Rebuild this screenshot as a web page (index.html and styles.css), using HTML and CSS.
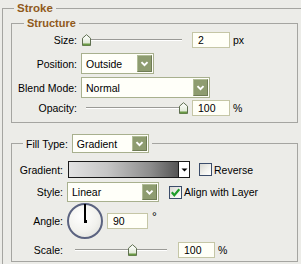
FILE: index.html
```html
<!DOCTYPE html>
<html>
<head>
<meta charset="utf-8">
<link rel="stylesheet" href="styles.css">
</head>
<body>
<fieldset class="outer">
  <legend class="ttl ttl-outer">Stroke</legend>
  <fieldset class="grp structure">
    <legend class="ttl ttl-inner">Structure</legend>
    <div class="row row-size">
      <span class="lbl lbl-s">Size:</span>
      <div class="slider slider-s">
        <svg class="thumb" style="left:0px" width="9" height="12" viewBox="0 0 9 12"><defs><linearGradient id="tg1" x1="0" y1="0" x2="0" y2="1"><stop offset="0" stop-color="#ffffff"/><stop offset="1" stop-color="#d9e4cd"/></linearGradient></defs><path d="M0.5 11.5V4.2L4.5 0.7L8.5 4.2V11.5Z" fill="url(#tg1)" stroke="#5f6f50"/><rect x="1" y="9.5" width="7" height="2" fill="#6a9a45"/></svg>
      </div>
      <div class="num num-s">2</div>
      <span class="unit">px</span>
    </div>
    <div class="row row-pos">
      <span class="lbl lbl-s">Position:</span>
      <div class="select sel-pos"><span class="sel-text">Outside</span><span class="arrow"><svg width="15" height="17" viewBox="0 0 15 17"><path d="M4 7L7.5 10.5L11 7" fill="none" stroke="#fff" stroke-width="2.2"/></svg></span></div>
    </div>
    <div class="row row-blend">
      <span class="lbl lbl-s">Blend Mode:</span>
      <div class="select sel-blend"><span class="sel-text">Normal</span><span class="arrow"><svg width="15" height="17" viewBox="0 0 15 17"><path d="M4 7L7.5 10.5L11 7" fill="none" stroke="#fff" stroke-width="2.2"/></svg></span></div>
    </div>
    <div class="row row-op">
      <span class="lbl lbl-s">Opacity:</span>
      <div class="slider slider-s">
        <svg class="thumb" style="left:97px" width="9" height="12" viewBox="0 0 9 12"><defs><linearGradient id="tg2" x1="0" y1="0" x2="0" y2="1"><stop offset="0" stop-color="#ffffff"/><stop offset="1" stop-color="#d9e4cd"/></linearGradient></defs><path d="M0.5 11.5V4.2L4.5 0.7L8.5 4.2V11.5Z" fill="url(#tg2)" stroke="#5f6f50"/><rect x="1" y="9.5" width="7" height="2" fill="#6a9a45"/></svg>
      </div>
      <div class="num num-s">100</div>
      <span class="unit">%</span>
    </div>
  </fieldset>
  <fieldset class="grp fill">
    <legend class="ttl-ctl">
      <span class="lbl">Fill Type:</span>
      <div class="select sel-fill"><span class="sel-text">Gradient</span><span class="arrow"><svg width="15" height="15" viewBox="0 0 15 15"><path d="M4 6L7.5 9.5L11 6" fill="none" stroke="#fff" stroke-width="2.2"/></svg></span></div>
    </legend>
    <div class="row row-grad">
      <span class="lbl lbl-f">Gradient:</span>
      <div class="gradbar"><span class="gradfill"></span><span class="graddrop"><svg width="9" height="15" viewBox="0 0 9 15"><path d="M1.5 6.5H7.5L4.5 9.5Z" fill="#000"/></svg></span></div>
      <span class="check check-rev"></span>
      <span class="cklbl cklbl-rev">Reverse</span>
    </div>
    <div class="row row-style">
      <span class="lbl lbl-f">Style:</span>
      <div class="select sel-style"><span class="sel-text">Linear</span><span class="arrow"><svg width="15" height="16" viewBox="0 0 15 16"><path d="M4 6.5L7.5 10L11 6.5" fill="none" stroke="#fff" stroke-width="2.2"/></svg></span></div>
      <span class="check check-align"><svg width="11" height="11" viewBox="0 0 11 11"><path d="M1.8 5.2L4.3 8.2L9.3 2.2" fill="none" stroke="#1f9d2a" stroke-width="2.2"/></svg></span>
      <span class="cklbl cklbl-align">Align with Layer</span>
    </div>
    <div class="row row-angle">
      <span class="lbl lbl-f">Angle:</span>
      <div class="dial"><span class="dial-line"></span><span class="dial-dot"></span></div>
      <div class="num num-a">90</div>
      <span class="deg">°</span>
    </div>
    <div class="row row-scale">
      <span class="lbl lbl-f">Scale:</span>
      <div class="slider slider-f">
        <svg class="thumb" style="left:57px" width="9" height="12" viewBox="0 0 9 12"><defs><linearGradient id="tg3" x1="0" y1="0" x2="0" y2="1"><stop offset="0" stop-color="#ffffff"/><stop offset="1" stop-color="#d9e4cd"/></linearGradient></defs><path d="M0.5 11.5V4.2L4.5 0.7L8.5 4.2V11.5Z" fill="url(#tg3)" stroke="#5f6f50"/><rect x="1" y="9.5" width="7" height="2" fill="#6a9a45"/></svg>
      </div>
      <div class="num num-sc">100</div>
      <span class="unit unit-sc">%</span>
    </div>
  </fieldset>
</fieldset>
</body>
</html>
```
FILE: styles.css
```css
* { box-sizing: border-box; }
html, body { margin: 0; padding: 0; }
body {
  width: 301px;
  height: 264px;
  overflow: hidden;
  background: #ecece8;
  font-family: "Liberation Sans", Arial, sans-serif;
  font-size: 10.5px;
  color: #000;
}
fieldset {
  margin: 0;
  padding: 0;
  border: 1px solid #a5a5a1;
  min-width: 0;
}
.outer {
  margin: 2px 0 0 2px;
  width: 299px;
  height: 262px;
  padding: 0 0 0 8px;
  border-right: none;
  border-bottom: none;
}
.ttl {
  font-weight: bold;
  font-size: 11.5px;
  color: #905a1c;
  line-height: 12px;
  padding: 0 3px;
}
.ttl-outer { margin-left: 3px; }
.ttl-inner { margin-left: 12px; font-size: 11px; }
.grp { width: 287px; }
.structure {
  margin-top: 3px;
  padding: 3px 0 6px 0;
}
.fill {
  margin-top: 11px;
  padding: 8px 0 3px 0;
}
.ttl-ctl {
  margin-left: 11px;
  padding: 0 3px;
  display: flex;
  align-items: center;
  height: 19px;
}
.row {
  display: flex;
  align-items: center;
}
.lbl { white-space: nowrap; }
.lbl-s { width: 65px; text-align: right; }
.lbl-f { width: 51px; text-align: right; }

.row-size { height: 16px; }
.row-pos { height: 21px; margin-top: 5px; }
.row-blend { height: 21px; margin-top: 3px; }
.row-op { height: 16px; margin-top: 2px; }

.row-grad { height: 17px; }
.row-style { height: 20px; margin-top: 4px; }
.row-angle { height: 36px; margin-top: 1px; }
.row-scale { height: 16px; margin-top: 3px; }

/* slider */
.slider {
  position: relative;
  height: 16px;
  background:
    linear-gradient(#9a9a96, #9a9a96) no-repeat 4px 7px / calc(100% - 12px) 1px,
    linear-gradient(#ffffff, #ffffff) no-repeat 4px 8px / calc(100% - 12px) 1px;
}
.slider-s { width: 108px; margin-left: 5px; }
.slider-f { width: 104px; margin-left: 8px; }
.thumb { position: absolute; top: 2px; }

/* numeric input */
.num {
  height: 16px;
  border: 1px solid #c5c6a6;
  background: #fffff7;
  padding-left: 5px;
  line-height: 14px;
}
.num-s { width: 38px; margin-left: 2px; }
.num-a { width: 41px; margin-left: 4px; }
.num-sc { width: 37px; margin-left: 3px; }
.unit { margin-left: 3px; }
.unit-sc { margin-left: 3px; }
.deg { margin-left: 4px; align-self: flex-start; margin-top: 7px; font-size: 12px; }

/* select */
.select {
  display: flex;
  align-items: stretch;
  height: 100%;
  border: 1px solid #a8b08e;
  background: #fffff9;
  padding: 1px;
}
.sel-text { flex: 1; padding-left: 3px; display: flex; align-items: center; }
.arrow {
  width: 15px;
  background: #8e9c70;
  border-top: 1px solid #b1bd97;
  border-left: 1px solid #b1bd97;
  border-right: 1px solid #6f7c55;
  border-bottom: 1px solid #6f7c55;
  display: flex;
  align-items: center;
  justify-content: center;
}
.arrow svg { display: block; }
.sel-pos { width: 73px; margin-left: 4px; }
.sel-blend { width: 129px; margin-left: 4px; }
.sel-fill { width: 77px; margin-left: 4px; height: 19px; }
.sel-style { width: 92px; margin-left: 4px; }

/* gradient */
.gradbar {
  display: flex;
  width: 122px;
  height: 17px;
  margin-left: 5px;
  border: 1px solid #1a1a1a;
  background: #fff;
}
.gradfill {
  flex: 1;
  background: linear-gradient(to right, #e2e2e2 0%, #c6c6c6 35%, #8c8c8c 75%, #555555 100%);
}
.graddrop {
  width: 11px;
  border-left: 1px solid #1a1a1a;
  background: #fff;
  display: flex;
  align-items: center;
  justify-content: center;
}

/* checkbox */
.check {
  width: 13px;
  height: 13px;
  border: 1px solid #3b4c6a;
  background: linear-gradient(135deg, #d8d8d2 0%, #f4f4f0 60%, #ffffff 100%);
  display: flex;
  align-items: center;
  justify-content: center;
}
.check-rev { margin-left: 9px; }
.check-align { margin-left: 10px; }
.cklbl { margin-left: 2px; }

/* dial */
.dial {
  position: relative;
  width: 36px;
  height: 36px;
  margin-left: 4px;
  border: 2px solid #5b6380;
  border-radius: 50%;
  background: radial-gradient(circle at 40% 35%, #ffffff 0%, #f2f2ee 55%, #dcdcd8 100%);
}
.dial-line {
  position: absolute;
  left: 15px;
  top: -1px;
  width: 2px;
  height: 17px;
  background: #000;
}
.dial-dot {
  position: absolute;
  left: 14.5px;
  top: 14.5px;
  width: 3px;
  height: 3px;
  background: #000;
}
```
